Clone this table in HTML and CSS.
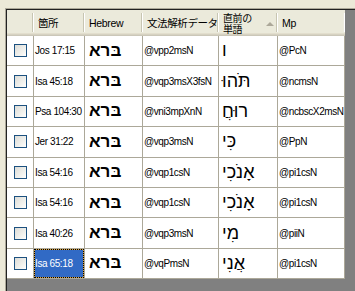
FILE: index.html
```html
<!DOCTYPE html>
<html lang="ja">
<head>
<meta charset="utf-8">
<link rel="stylesheet" href="styles.css">
</head>
<body>
<div class="frame">
  <div class="view">
    <div class="grid">
      <div class="hc"></div>
      <div class="hc"><span class="jp">箇所</span></div>
      <div class="hc"><span class="lat">Hebrew</span></div>
      <div class="hc"><span class="jp">文法解析データ</span></div>
      <div class="hc sorted"><span class="jp two">直前の<br>単語</span><span class="tri"></span></div>
      <div class="hc last"><span class="lat">Mp</span></div>

      <div class="c ck"><span class="cb"></span></div>
      <div class="c t">Jos 17:15</div>
      <div class="c hb" dir="rtl">בּרא</div>
      <div class="c t">@vpp2msN</div>
      <div class="c hw" dir="rtl">ו</div>
      <div class="c t">@PcN</div>

      <div class="c ck"><span class="cb"></span></div>
      <div class="c t">Isa 45:18</div>
      <div class="c hb" dir="rtl">בּרא</div>
      <div class="c t">@vqp3msX3fsN</div>
      <div class="c hw" dir="rtl">תֹּהוּ</div>
      <div class="c t">@ncmsN</div>

      <div class="c ck"><span class="cb"></span></div>
      <div class="c t">Psa 104:30</div>
      <div class="c hb" dir="rtl">בּרא</div>
      <div class="c t">@vni3mpXnN</div>
      <div class="c hw" dir="rtl">רוּחֲ</div>
      <div class="c t">@ncbscX2msN</div>

      <div class="c ck"><span class="cb"></span></div>
      <div class="c t">Jer 31:22</div>
      <div class="c hb" dir="rtl">בּרא</div>
      <div class="c t">@vqp3msN</div>
      <div class="c hw" dir="rtl">כִּי</div>
      <div class="c t">@PpN</div>

      <div class="c ck"><span class="cb"></span></div>
      <div class="c t">Isa 54:16</div>
      <div class="c hb" dir="rtl">בּרא</div>
      <div class="c t">@vqp1csN</div>
      <div class="c hw" dir="rtl">אָנֹכִי</div>
      <div class="c t">@pi1csN</div>

      <div class="c ck"><span class="cb"></span></div>
      <div class="c t">Isa 54:16</div>
      <div class="c hb" dir="rtl">בּרא</div>
      <div class="c t">@vqp1csN</div>
      <div class="c hw" dir="rtl">אָנֹכִי</div>
      <div class="c t">@pi1csN</div>

      <div class="c ck"><span class="cb"></span></div>
      <div class="c t">Isa 40:26</div>
      <div class="c hb" dir="rtl">בּרא</div>
      <div class="c t">@vqp3msN</div>
      <div class="c hw" dir="rtl">מִי</div>
      <div class="c t">@piiN</div>

      <div class="c ck"><span class="cb"></span></div>
      <div class="c t sel">Isa 65:18</div>
      <div class="c hb" dir="rtl">בּרא</div>
      <div class="c t">@vqPmsN</div>
      <div class="c hw" dir="rtl">אֲנִי</div>
      <div class="c t">@pi1csN</div>
    </div>
  </div>
</div>
</body>
</html>
```

FILE: styles.css
```css
html, body {
  margin: 0;
  padding: 0;
  background: #ECE9D8;
  overflow: hidden;
}
body {
  width: 355px;
  height: 291px;
}
.frame {
  margin: 8px 0 0 5px;
  border-top: 1px solid #ACA899;
  border-left: 1px solid #ACA899;
  height: 282px;
  overflow: hidden;
}
.view {
  border-top: 1px solid #222;
  border-left: 1px solid #222;
  background: #808080;
  height: 300px;
}
.grid {
  display: grid;
  grid-template-columns: 27px 51px 58px 76px 59px 67px;
  grid-template-rows: 26px repeat(8, 30.4px);
  width: 338px;
}
.hc {
  position: relative;
  background: #EBEADB;
  box-shadow: inset 0 -1px 0 #CBC7B8, inset 0 -2px 0 #D6D2C2, inset 0 -3px 0 #E2DECD;
  display: flex;
  align-items: center;
  padding-left: 4px;
  color: #000;
}
.hc::after {
  content: "";
  position: absolute;
  right: 0;
  top: 3px;
  bottom: 4px;
  width: 0;
  border-left: 1px solid #C7C5B2;
  border-right: 1px solid #FFFFFF;
}
.hc.last::after {
  border-left-color: #ECEBE0;
  border-right-color: #FFFFFF;
}
.jp {
  font-family: "Noto Sans CJK JP", sans-serif;
  font-size: 10.5px;
  line-height: 12px;
  letter-spacing: -0.4px;
}
.jp.two {
  font-size: 10px;
  line-height: 11px;
  margin-top: -1px;
}
.lat {
  font-family: "Liberation Sans", Arial, sans-serif;
  font-size: 10.5px;
  letter-spacing: -0.3px;
}
.tri {
  position: absolute;
  left: 47px;
  top: 12px;
  width: 0;
  height: 0;
  border-left: 4px solid transparent;
  border-right: 4px solid transparent;
  border-bottom: 4px solid #ACA899;
}
.c {
  background: #FFFFFF;
  border-right: 1px solid #ACA899;
  border-bottom: 1px solid #ACA899;
  display: flex;
  align-items: center;
  overflow: hidden;
  white-space: nowrap;
  color: #000;
}
.ck {
  justify-content: center;
}
.cb {
  width: 13px;
  height: 13px;
  box-sizing: border-box;
  border: 1px solid #1C5180;
  background: linear-gradient(135deg, #DCDCD7 0%, #F4F4F0 70%, #FFFFFF 100%);
  margin-left: 1px;
}
.t {
  font-family: "Liberation Sans", Arial, sans-serif;
  font-size: 10px;
  letter-spacing: -0.4px;
  padding-left: 1px;
}
.hb, .hw {
  direction: rtl;
  justify-content: flex-end;
  font-family: "Liberation Sans", Arial, sans-serif;
}
.hb {
  font-weight: bold;
  font-size: 17px;
  padding-left: 4px;
}
.hw {
  font-size: 18px;
  padding-left: 3px;
}
.sel {
  position: relative;
  background: #316AC5;
  color: #FFFFFF;
  box-shadow: inset 0 0 0 1px #D9A340;
}
.sel::after {
  content: "";
  position: absolute;
  left: 0;
  top: 0;
  right: 0;
  bottom: 0;
  border: 1px dotted #000;
}
```
